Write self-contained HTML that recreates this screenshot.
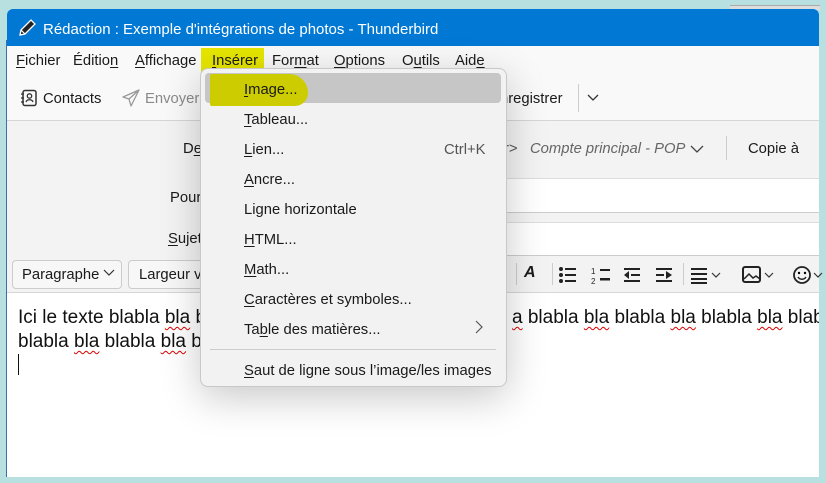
<!DOCTYPE html>
<html><head><meta charset="utf-8"><style>
*{margin:0;padding:0;box-sizing:border-box}
body{width:826px;height:483px;background:#b9e0e0;position:relative;overflow:hidden;font-family:"Liberation Sans",sans-serif;font-size:14.8px;color:#1a1a1a}
.a{position:absolute;white-space:nowrap}
u{text-decoration:underline;text-underline-offset:2px}
.sq{text-decoration:underline wavy #d00;text-decoration-thickness:1px;text-underline-offset:3px}
.m{font-size:14.8px}
</style></head><body>
<div class="a" style="left:730px;top:5px;width:90px;height:5px;background:#ddd;border-top:1px solid #aaa"></div>
<div class="a" style="left:7px;top:9px;width:812px;height:468px;background:#fff;border-radius:6px 6px 0 0;overflow:hidden">
  <div class="a" style="left:0;top:0;width:812px;height:37px;background:#0078d4"></div>
  <div class="a" style="left:0;top:37px;width:812px;height:83px;background:#f9f9f9"></div>
  <div class="a" style="left:0;top:111px;width:812px;height:1px;background:#d6d6d6"></div>
  <div class="a" style="left:0;top:112px;width:812px;height:172px;background:#f3f3f3"></div>
  <div class="a" style="left:230px;top:169px;width:582px;height:35px;background:#fff;border-bottom:1px solid #ccc;border-top:1px solid #ddd"></div>
  <div class="a" style="left:230px;top:213px;width:582px;height:34px;background:#fff;border-bottom:1px solid #ccc;border-top:1px solid #ddd"></div>
  <div class="a" style="left:0;top:283px;width:812px;height:1px;background:#d6d6d6"></div>
  <div class="a" style="left:11px;top:297px;width:801px;height:60px;overflow:hidden;font-size:19px;color:#111;line-height:24px">
    <div class="a" style="left:0;top:0">Ici le texte blabla <span class="sq">bla</span> b</div>
    <div class="a" style="left:0;top:24px">blabla <span class="sq">bla</span> blabla <span class="sq">bla</span> bl</div>
    <div class="a" style="left:494px;top:0"><span class="sq">a</span> blabla <span class="sq">bla</span> blabla <span class="sq">bla</span> blabla <span class="sq">bla</span> blabla</div>
  </div>
</div>
<div class="a" style="left:6px;top:40px;width:1px;height:437px;background:#3a6fb0"></div>
<!-- title -->
<svg class="a" style="left:17px;top:18px" width="20" height="20" viewBox="0 0 20 20"><path d="M3 17l1-5L14 2l4 4L8 16z" fill="#222" stroke="#fff" stroke-width="1.3"/><path d="M4 12l4 4" stroke="#fff" stroke-width="1.2"/></svg>
<div class="a" style="left:43px;top:21px;color:#fff;font-size:15px">Rédaction : Exemple d'intégrations de photos - Thunderbird</div>
<!-- menubar -->
<div class="a" style="left:201px;top:48px;width:63px;height:27px;background:#e6e600"></div>
<div class="a m" style="left:16px;top:53px"><u>F</u>ichier</div>
<div class="a m" style="left:73px;top:53px">Éditio<u>n</u></div>
<div class="a m" style="left:135px;top:53px"><u>A</u>ffichage</div>
<div class="a m" style="left:212px;top:53px"><u>I</u>nsérer</div>
<div class="a m" style="left:272px;top:53px">For<u>m</u>at</div>
<div class="a m" style="left:334px;top:53px"><u>O</u>ptions</div>
<div class="a m" style="left:402px;top:53px">O<u>u</u>tils</div>
<div class="a m" style="left:455px;top:53px">Aid<u>e</u></div>
<!-- toolbar -->
<svg class="a" style="left:20px;top:89px" width="18" height="18" viewBox="0 0 18 18"><rect x="3" y="1.5" width="13" height="15" rx="2" fill="none" stroke="#333" stroke-width="1.5"/><circle cx="9.5" cy="7" r="2.2" fill="none" stroke="#333" stroke-width="1.3"/><path d="M6 13c1-3 6-3 7 0" fill="none" stroke="#333" stroke-width="1.3"/><path d="M1 5h3M1 9h3M1 13h3" stroke="#333" stroke-width="1.2"/></svg>
<div class="a m" style="left:43px;top:91px">Contacts</div>
<svg class="a" style="left:122px;top:89px" width="18" height="18" viewBox="0 0 18 18"><path d="M17 1L1 8l6 2 2 7z M7 10l10-9" fill="none" stroke="#999" stroke-width="1.3" stroke-linejoin="round"/></svg>
<div class="a m" style="left:145px;top:91px;color:#8a8a8a">Envoyer</div>
<div class="a m" style="left:500px;top:91px">nregistrer</div>
<div class="a" style="left:578px;top:84px;width:1px;height:28px;background:#ccc"></div>
<svg class="a" style="left:587px;top:93px" width="12" height="10"><path d="M1 2l5 5 5-5" fill="none" stroke="#333" stroke-width="1.3"/></svg>
<!-- headers -->
<div class="a m" style="left:183px;top:141px">D<u>e</u></div>
<div class="a m" style="left:504px;top:141px;color:#555">r&gt;</div>
<div class="a m" style="left:530px;top:141px;color:#666;font-style:italic">Compte principal - POP</div>
<svg class="a" style="left:690px;top:144px" width="14" height="10"><path d="M1 2l6 6 6-6" fill="none" stroke="#444" stroke-width="1.3"/></svg>
<div class="a" style="left:726px;top:136px;width:1px;height:24px;background:#ccc"></div>
<div class="a m" style="left:748px;top:141px">Copie à</div>
<div class="a m" style="left:170px;top:190px">Pour</div>
<div class="a m" style="left:168px;top:231px"><u>S</u>ujet</div>
<!-- format bar -->
<div class="a" style="left:12px;top:260px;width:110px;height:29px;border:1px solid #ccc;border-radius:4px;background:#f7f7f7"></div>
<div class="a m" style="left:22px;top:267px">Paragraphe</div>
<svg class="a" style="left:103px;top:269px" width="12" height="8"><path d="M1 1l5 5 5-5" fill="none" stroke="#333" stroke-width="1.2"/></svg>
<div class="a" style="left:128px;top:260px;width:100px;height:29px;border:1px solid #ccc;border-radius:4px;background:#f7f7f7"></div>
<div class="a m" style="left:139px;top:267px">Largeur v</div>
<div class="a" style="left:516px;top:263px;width:1px;height:22px;background:#ccc"></div>
<div class="a" style="left:524px;top:264px;font-size:16px;font-style:italic;font-weight:bold">A</div>
<div class="a" style="left:552px;top:263px;width:1px;height:22px;background:#ccc"></div>
<svg class="a" style="left:558px;top:265px" width="120" height="20" viewBox="0 0 120 20"><g fill="#222"><circle cx="3" cy="4" r="2"/><circle cx="3" cy="10" r="2"/><circle cx="3" cy="16" r="2"/><rect x="7" y="3" width="11" height="2"/><rect x="7" y="9" width="11" height="2"/><rect x="7" y="15" width="11" height="2"/><rect x="42" y="4" width="10" height="2"/><rect x="42" y="13" width="10" height="2.5"/><text x="33" y="9" font-size="8" font-family="Liberation Sans">1</text><text x="33" y="19" font-size="8" font-family="Liberation Sans">2</text><rect x="66" y="3" width="16" height="2"/><rect x="66" y="15" width="16" height="2"/><rect x="73" y="9" width="9" height="2"/><path d="M66 10l5-4v8z"/><rect x="98" y="3" width="16" height="2"/><rect x="98" y="15" width="16" height="2"/><rect x="98" y="9" width="8" height="2"/><path d="M114 10l-6-4v8z"/></g></svg>
<div class="a" style="left:683px;top:263px;width:1px;height:22px;background:#ccc"></div>
<svg class="a" style="left:690px;top:265px" width="136" height="20" viewBox="0 0 136 20"><g fill="#222"><rect x="1" y="3" width="16" height="2"/><rect x="1" y="8" width="16" height="2"/><rect x="1" y="13" width="16" height="2"/><rect x="1" y="17" width="16" height="2"/></g><path d="M22 8l4 4 4-4" fill="none" stroke="#333" stroke-width="1.2"/><rect x="53" y="2" width="17" height="15" rx="2" fill="none" stroke="#222" stroke-width="2"/><path d="M54 14l5-5 4 4 3-2 4 3" fill="none" stroke="#222" stroke-width="1.5"/><path d="M75 8l4 4 4-4" fill="none" stroke="#333" stroke-width="1.2"/><circle cx="112" cy="10" r="8" fill="none" stroke="#222" stroke-width="1.8"/><circle cx="109" cy="8" r="1.2"/><circle cx="115" cy="8" r="1.2"/><path d="M108 12c2 3 6 3 8 0" fill="none" stroke="#222" stroke-width="1.5"/><path d="M124 8l4 4 4-4" fill="none" stroke="#333" stroke-width="1.2"/></svg>
<div class="a" style="left:18px;top:354px;width:1px;height:21px;background:#111"></div>
<!-- menu -->
<div class="a" style="left:200px;top:68px;width:307px;height:319px;background:#f2f2f2;border:1px solid #c8c8c8;border-radius:8px;box-shadow:0 10px 40px rgba(0,0,0,0.22)"></div>
<div class="a" style="left:205px;top:73px;width:296px;height:30px;background:#c6c6c6;border-radius:4px"></div>
<div class="a" style="left:210px;top:74px;width:98px;height:32px;background:#cccc00;border-radius:2px 20px 14px 2px"></div>
<div class="a m" style="left:244px;top:82px"><u>I</u>mage...</div>
<div class="a m" style="left:244px;top:112px"><u>T</u>ableau...</div>
<div class="a m" style="left:244px;top:142px"><u>L</u>ien...</div>
<div class="a m" style="left:444px;top:142px;color:#555">Ctrl+K</div>
<div class="a m" style="left:244px;top:172px"><u>A</u>ncre...</div>
<div class="a m" style="left:244px;top:202px">Ligne horizontale</div>
<div class="a m" style="left:244px;top:232px"><u>H</u>TML...</div>
<div class="a m" style="left:244px;top:262px"><u>M</u>ath...</div>
<div class="a m" style="left:244px;top:292px"><u>C</u>aractères et symboles...</div>
<div class="a m" style="left:244px;top:322px">Ta<u>b</u>le des matières...</div>
<svg class="a" style="left:474px;top:320px" width="10" height="14"><path d="M2 1l6 6-6 6" fill="none" stroke="#555" stroke-width="1.2"/></svg>
<div class="a" style="left:210px;top:349px;width:286px;height:1px;background:#ccc"></div>
<div class="a m" style="left:244px;top:363px"><u>S</u>aut de ligne sous l’image/les images</div>
</body></html>
